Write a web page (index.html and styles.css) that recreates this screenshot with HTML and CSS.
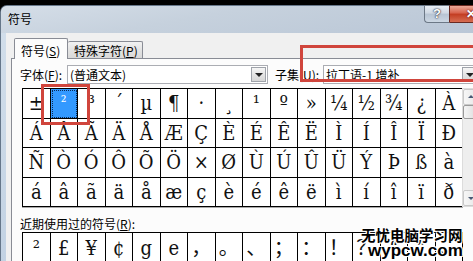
FILE: index.html
```html
<!DOCTYPE html>
<html lang="zh-CN">
<head>
    <meta charset="UTF-8">
    <title>符号</title>
    <link rel="stylesheet" href="styles.css">
</head>
<body>

    <div class="screen">
        <div class="window">
            <div class="titlebar">
                <span class="title">符号</span>
                <div class="caption-buttons">
                    <span class="cap-btn help">?</span>
                    <span class="cap-btn close">✕</span>
                </div>
            </div>

            <div class="client">
                <div class="tabs">
                    <div class="tab active">符号(<u>S</u>)</div>
                    <div class="tab">特殊字符(<u>P</u>)</div>
                </div>

                <div class="tabpage">
                    <div class="font-row">
                        <label class="lbl lbl-font">字体(<u>F</u>):</label>
                        <div class="combo combo-font"><span class="combo-text">(普通文本)</span><span class="drop"></span></div>
                        <label class="lbl lbl-subset">子集(<u>U</u>):</label>
                        <div class="combo combo-subset"><span class="combo-text">拉丁语-1 增补</span><span class="drop"></span></div>
                    </div>

                    <div class="charmap">
                        <div class="grid">
                            <span>±</span><span class="selected">²</span><span>³</span><span>´</span>
                            <span>µ</span><span>¶</span><span>·</span><span>¸</span>
                            <span>¹</span><span>º</span><span>»</span><span>¼</span>
                            <span>½</span><span>¾</span><span>¿</span><span>À</span>

                            <span>Á</span><span>Â</span><span>Ã</span><span>Ä</span>
                            <span>Å</span><span>Æ</span><span>Ç</span><span>È</span>
                            <span>É</span><span>Ê</span><span>Ë</span><span>Ì</span>
                            <span>Í</span><span>Î</span><span>Ï</span><span>Ð</span>

                            <span>Ñ</span><span>Ò</span><span>Ó</span><span>Ô</span>
                            <span>Õ</span><span>Ö</span><span>×</span><span>Ø</span>
                            <span>Ù</span><span>Ú</span><span>Û</span><span>Ü</span>
                            <span>Ý</span><span>Þ</span><span>ß</span><span>à</span>

                            <span>á</span><span>â</span><span>ã</span><span>ä</span>
                            <span>å</span><span>æ</span><span>ç</span><span>è</span>
                            <span>é</span><span>ê</span><span>ë</span><span>ì</span>
                            <span>í</span><span>î</span><span>ï</span><span>ð</span>
                        </div>
                        <div class="vscroll">
                            <span class="sb-btn up"></span>
                            <span class="sb-thumb"></span>
                            <span class="sb-track"></span>
                            <span class="sb-btn down"></span>
                        </div>
                    </div>

                    <div class="recent-label">近期使用过的符号(<u>R</u>):</div>
                    <div class="grid recent">
                        <span>²</span><span>£</span><span>¥</span><span>¢</span>
                        <span>g</span><span>e</span><span>，</span><span>。</span>
                        <span>、</span><span>；</span><span>：</span><span>！</span>
                        <span>？</span><span>“</span><span>”</span><span>、</span>
                    </div>
                </div>
            </div>
        </div>

        <!-- 标注框 -->
        <div class="mark mark-subset"></div>
        <div class="mark mark-cell"></div>

        <div class="watermark">
            <div class="wm-cn">无忧电脑学习网</div>
            <div class="wm-en">wypcw.com</div>
        </div>
    </div>

</body>
</html>
```

FILE: styles.css
```css
* {
    box-sizing: border-box;
}

body {
    margin: 0;
    background: #000;
    font-family: "Noto Sans CJK SC", sans-serif;
    font-size: 12px;
    color: #000;
}

.screen {
    position: relative;
    width: 473px;
    height: 261px;
    overflow: hidden;
    background: #000;
    padding-top: 5px;
}

.window {
    width: 498px;
    height: 260px;
    background: linear-gradient(to bottom, #d3dfeb, #c2d2e3);
    border: 1px solid #66778a;
    border-bottom: none;
    border-radius: 7px 7px 0 0;
}

.titlebar {
    height: 27px;
    display: flex;
    justify-content: space-between;
    align-items: flex-start;
    padding-left: 7px;
    background: linear-gradient(170deg, #d5dee8 0%, #c6d1dd 40%, #b9c6d6 100%);
    border-radius: 6px 6px 0 0;
}

.title {
    margin-top: 6px;
    line-height: 14px;
}

.caption-buttons {
    display: flex;
    margin-right: 5px;
    margin-top: -1px;
}

.cap-btn {
    height: 18px;
    text-align: center;
    color: #fff;
    font-family: "Liberation Sans", sans-serif;
    font-weight: bold;
    line-height: 16px;
}

.help {
    width: 25px;
    border: 1px solid #6c7886;
    border-right: none;
    border-radius: 0 0 0 4px;
    background: linear-gradient(to bottom, #e9eef4, #cfd8e3 45%, #b7c4d3 50%, #ccd7e3);
    font-size: 13px;
    text-shadow: 0 0 2px #223, 0 0 1px #223;
}

.close {
    width: 43px;
    border: 1px solid #6a2a22;
    border-radius: 0 0 4px 0;
    background: linear-gradient(to bottom, #eaa898, #d7604a 45%, #c23c21 50%, #d66d52);
    font-size: 12px;
    text-shadow: 0 0 2px #400;
}

.client {
    margin: 0 5px;
    height: 233px;
    background: #f0f0f0;
    padding: 5px 5px 0 5px;
}

.tabs {
    display: flex;
    align-items: flex-end;
    height: 21px;
    padding-left: 3px;
    margin-bottom: -1px;
    position: relative;
    z-index: 1;
}

.tab {
    height: 17px;
    margin-bottom: 1px;
    padding: 2px 0 0 6px;
    width: 75px;
    line-height: 14px;
    border: 1px solid #898c95;
    border-bottom: none;
    border-left: none;
    border-radius: 2px 2px 0 0;
    background: linear-gradient(to bottom, #f2f2f2, #e3e3e3 50%, #d9d9d9);
}

.tab.active {
    width: 54px;
    height: 21px;
    margin-bottom: 0;
    padding: 5px 0 0 6px;
    border-left: 1px solid #898c95;
    background: #fcfcfc;
}

.tabpage {
    height: 210px;
    border: 1px solid #898c95;
    background: #fcfcfc;
    padding: 6px 0 0 8px;
}

.font-row {
    display: flex;
    align-items: center;
    height: 19px;
}

.lbl {
    line-height: 14px;
    white-space: nowrap;
}

.lbl-font {
    width: 47px;
}

.lbl-subset {
    width: 48px;
    margin-left: 7px;
}

.combo {
    display: flex;
    align-items: center;
    height: 19px;
    padding-left: 2px;
    border: 1px solid #abadb3;
    background: #fff;
}

.combo-text {
    flex: 1;
    line-height: 14px;
    white-space: nowrap;
}

.combo-font {
    width: 201px;
}

.combo-subset {
    width: 156px;
}

.drop {
    position: relative;
    width: 15px;
    height: 15px;
    margin-right: 1px;
    border: 1px solid #9fa3aa;
    background: linear-gradient(to bottom, #f6f6f6, #e4e4e4 50%, #d6d6d6);
}

.drop::after {
    content: "";
    position: absolute;
    left: 3px;
    top: 5px;
    border-left: 4px solid transparent;
    border-right: 4px solid transparent;
    border-top: 4px solid #222;
}

.charmap {
    display: flex;
    margin: 4px 0 0 2px;
}

.grid {
    display: grid;
    grid-template-columns: repeat(16, 27.5px);
    grid-auto-rows: 29.5px;
    width: 441px;
    border-left: 1px solid #000;
    border-top: 1px solid #000;
    background: #fff;
    box-shadow: 0 1px 0 #a9a9a9;
    font-family: "DejaVu Serif Condensed", "DejaVu Serif", "Noto Sans CJK SC", serif;
    font-stretch: condensed;
    font-size: 20px;
    color: #111;
}

.grid span {
    display: flex;
    align-items: center;
    justify-content: center;
    border-right: 1px solid #000;
    border-bottom: 1px solid #000;
    overflow: hidden;
    line-height: 1;
}

.grid .selected {
    align-items: flex-start;
    padding-top: 5px;
    background: #3399ff;
    color: #fff;
    outline: 1px dotted #0b2a55;
    outline-offset: -2px;
    font-size: 16px;
}

.vscroll {
    display: flex;
    flex-direction: column;
    width: 17px;
    height: 119px;
    margin-left: -1px;
    border: 1px solid #dcdcdc;
    background: #eeeeee;
}

.sb-btn {
    position: relative;
    height: 16px;
    border: 1px solid #c9c9c9;
    border-radius: 2px;
    background: linear-gradient(to right, #f7f7f7, #e6e6e6);
}

.sb-btn::after {
    content: "";
    position: absolute;
    left: 4px;
    border-left: 3px solid transparent;
    border-right: 3px solid transparent;
}

.sb-btn.up::after {
    top: 5px;
    border-bottom: 3px solid #4a5a75;
}

.sb-btn.down::after {
    top: 6px;
    border-top: 3px solid #4a5a75;
}

.sb-thumb {
    height: 14px;
    border: 1px solid #9a9a9a;
    border-radius: 2px;
    background: linear-gradient(to right, #f4f4f4, #dcdcdc);
}

.sb-track {
    flex: 1;
}

.recent-label {
    margin-top: 10px;
    line-height: 14px;
    white-space: nowrap;
}

.grid.recent {
    margin: 1px 0 0 2px;
    grid-auto-rows: 30px;
    box-shadow: none;
}

.mark {
    position: absolute;
    border: 3px solid #d0453c;
}

.mark-subset {
    left: 300px;
    top: 45px;
    width: 190px;
    height: 37px;
}

.mark-cell {
    left: 41px;
    top: 84px;
    width: 49px;
    height: 41px;
}

.watermark {
    position: absolute;
    left: 361px;
    top: 227px;
    font-weight: bold;
    color: #000;
    text-shadow: -1px -1px 0 #fff, 1px -1px 0 #fff, -1px 1px 0 #fff, 1px 1px 0 #fff, 0 0 2px #fff;
}

.wm-cn {
    font-size: 14.5px;
    line-height: 16px;
    white-space: nowrap;
}

.wm-en {
    margin-left: 7px;
    font-family: "Liberation Sans", sans-serif;
    font-size: 17px;
    line-height: 16px;
}
```
